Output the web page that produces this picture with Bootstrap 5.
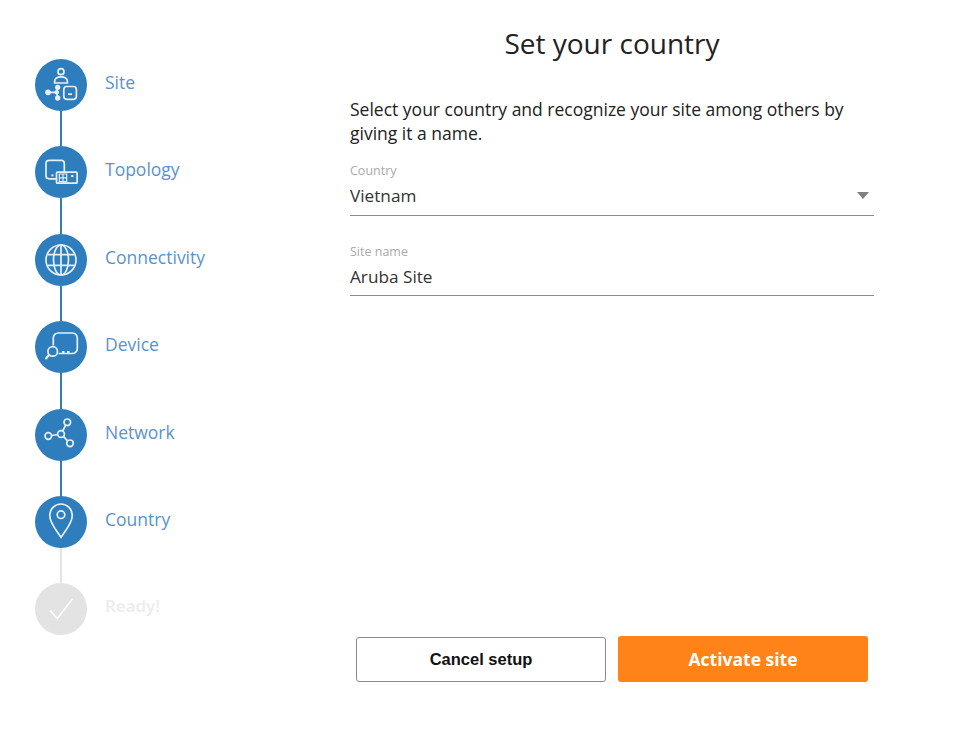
<!DOCTYPE html>
<html lang="en">
<head>
    <meta charset="UTF-8">
    <meta name="viewport" content="width=device-width, initial-scale=1.0">
    <title>Set your country</title>
    <link rel="stylesheet" href="https://cdn.jsdelivr.net/npm/bootstrap@5.3.0/dist/css/bootstrap.min.css">
    <style>
        body {
            background: #fff;
            font-family: "Open Sans", sans-serif;
            color: #222;
        }
        .setup-page {
            height: 752px;
            padding: 59px 100px 0 35px;
        }
        .stepper {
            width: 315px;
        }
        .step-item {
            height: 87.4px;
        }
        .step-rail {
            width: 52px;
        }
        .step-circle {
            width: 52px;
            height: 52px;
            background: #2e7dbd;
        }
        .step-circle svg {
            display: block;
            fill: none;
            stroke: #e6f0f8;
            stroke-width: 1.7;
        }
        .step-line {
            width: 2.5px;
            height: 35.4px;
            background: #2e7dbd;
        }
        .step-label {
            margin: 11px 0 0 18px;
            font-size: 17.5px;
            line-height: 24px;
            color: #5a93cb;
        }
        .step-item.is-next .step-line {
            background: #e3e3e3;
        }
        .step-item.is-todo .step-circle {
            background: #e3e3e3;
        }
        .step-item.is-todo .step-circle svg {
            stroke: #fff;
        }
        .step-item.is-todo .step-label {
            color: #ececec;
            font-size: 17px;
            font-weight: 600;
        }
        .setup-panel {
            width: 524px;
            margin-top: -59px;
        }
        .setup-title {
            margin: 25px 0 0;
            font-size: 28px;
            line-height: 36px;
            font-weight: 400;
            color: #222;
        }
        .setup-intro {
            margin: 36px 0 0;
            font-size: 17.5px;
            line-height: 24px;
        }
        .setup-field {
            margin-top: 19px;
        }
        .setup-field + .setup-field {
            margin-top: 29px;
        }
        .field-caption {
            margin: 0;
            font-size: 12.5px;
            line-height: 14px;
            color: #aaa;
        }
        .setup-field .form-control,
        .setup-field .form-select {
            padding: 0;
            border: 0;
            border-bottom: 1px solid #8c8c8c;
            border-radius: 0;
            font-size: 17.2px;
            line-height: 24px;
            color: #333;
            box-shadow: none;
        }
        .setup-field .form-select {
            height: 38px;
            padding-bottom: 1px;
            background-image: url("data:image/svg+xml,%3Csvg xmlns='http://www.w3.org/2000/svg' viewBox='0 0 12 7'%3E%3Cpath fill='%23808080' d='M0 0h12L6 7z'/%3E%3C/svg%3E");
            background-position: right 5px top 14px;
            background-size: 12px 7px;
        }
        .setup-field .form-control {
            height: 37px;
            padding-bottom: 1px;
        }
        .setup-actions {
            margin-top: 340px;
            padding: 0 6px;
        }
        .btn-cancel,
        .btn-activate {
            border-radius: 3px;
            font-weight: 700;
        }
        .btn-cancel {
            width: 250px;
            height: 45px;
            border: 1px solid #8a8a8a;
            background: #fff;
            color: #111;
            font-family: "Liberation Sans", sans-serif;
            font-size: 16.5px;
        }
        .btn-activate {
            width: 250px;
            height: 46px;
            border: 0;
            background: #ff8318;
            color: #fff;
            font-size: 17.5px;
        }
    </style>
</head>
<body>
    <div class="setup-page d-flex">
        <!-- Steps -->
        <div class="stepper flex-shrink-0">
            <div class="step-item d-flex">
                <div class="step-rail d-flex flex-column align-items-center">
                    <div class="step-circle rounded-circle">
                        <svg width="52" height="52" viewBox="0 0 52 52">
                            <circle cx="26" cy="12.7" r="3"/>
                            <path d="M19.6 24v-1.6c0-2.9 2.8-4.6 6.4-4.6s6.4 1.7 6.4 4.6V24z"/>
                            <path d="M12.7 33.3h9M22.7 28.3l-1 5 1 6"/>
                            <circle cx="21.7" cy="33.3" r="1.5" fill="#e6f0f8"/>
                            <circle cx="13" cy="33.3" r="2" fill="#e6f0f8"/>
                            <circle cx="22.7" cy="28.3" r="1.8" fill="#e6f0f8"/>
                            <circle cx="22.7" cy="39" r="1.8" fill="#e6f0f8"/>
                            <rect x="28.8" y="27.5" width="12.6" height="12.8" rx="3"/>
                            <path d="M33 35.2h4"/>
                        </svg>
                    </div>
                    <div class="step-line"></div>
                </div>
                <div class="step-label">Site</div>
            </div>
            <div class="step-item d-flex">
                <div class="step-rail d-flex flex-column align-items-center">
                    <div class="step-circle rounded-circle">
                        <svg width="52" height="52" viewBox="0 0 52 52">
                            <path d="M21 32.8h-7a3 3 0 0 1-3-3V17.3a3 3 0 0 1 3-3h12.3a3 3 0 0 1 3 3v8.7"/>
                            <rect x="21.5" y="26.2" width="20.6" height="11" rx="1"/>
                            <path d="M24.3 28h7.4v7.6h-7.4zM28 28v7.6M24.3 31.8h7.4" stroke-width="1.2"/>
                            <rect x="36.2" y="28.9" width="2.2" height="2.2" fill="#e6f0f8" stroke="none"/>
                            <rect x="16.4" y="28.4" width="2" height="2" fill="#e6f0f8" stroke="none"/>
                        </svg>
                    </div>
                    <div class="step-line"></div>
                </div>
                <div class="step-label">Topology</div>
            </div>
            <div class="step-item d-flex">
                <div class="step-rail d-flex flex-column align-items-center">
                    <div class="step-circle rounded-circle">
                        <svg width="52" height="52" viewBox="0 0 52 52">
                            <circle cx="26" cy="26" r="15"/>
                            <ellipse cx="26" cy="26" rx="7.5" ry="15"/>
                            <path d="M26 11v30M12.8 20.6h26.4M12.8 31.4h26.4"/>
                        </svg>
                    </div>
                    <div class="step-line"></div>
                </div>
                <div class="step-label">Connectivity</div>
            </div>
            <div class="step-item d-flex">
                <div class="step-rail d-flex flex-column align-items-center">
                    <div class="step-circle rounded-circle">
                        <svg width="52" height="52" viewBox="0 0 52 52">
                            <path d="M18.3 24.5V17a5 5 0 0 1 5-5h14a5 5 0 0 1 5 5v10.5a5 5 0 0 1-5 5H23.5"/>
                            <circle cx="17.7" cy="30.4" r="4.8"/>
                            <path d="M14.2 33.8L11 37.4" stroke-width="2.2" stroke-linecap="round"/>
                            <path d="M27 31h2.5M32 31h2.5" stroke-width="1.8"/>
                        </svg>
                    </div>
                    <div class="step-line"></div>
                </div>
                <div class="step-label">Device</div>
            </div>
            <div class="step-item d-flex">
                <div class="step-rail d-flex flex-column align-items-center">
                    <div class="step-circle rounded-circle">
                        <svg width="52" height="52" viewBox="0 0 52 52">
                            <circle cx="26" cy="25" r="3.4"/>
                            <circle cx="13.3" cy="27" r="3.3"/>
                            <circle cx="32.3" cy="13.3" r="3.3"/>
                            <circle cx="35" cy="34.3" r="3.3"/>
                            <path d="M16.5 26.5l6.2-1M27.6 22l3.2-5.8M28.4 27.4l4.2 4.4"/>
                        </svg>
                    </div>
                    <div class="step-line"></div>
                </div>
                <div class="step-label">Network</div>
            </div>
            <div class="step-item is-next d-flex">
                <div class="step-rail d-flex flex-column align-items-center">
                    <div class="step-circle rounded-circle">
                        <svg width="52" height="52" viewBox="0 0 52 52">
                            <path d="M26 41.4C22 35 14.7 27.5 14.7 19.3a11.3 11.3 0 0 1 22.6 0C37.3 27.5 30 35 26 41.4z"/>
                            <circle cx="26" cy="18.7" r="3.8"/>
                        </svg>
                    </div>
                    <div class="step-line"></div>
                </div>
                <div class="step-label">Country</div>
            </div>
            <div class="step-item is-todo d-flex">
                <div class="step-rail d-flex flex-column align-items-center">
                    <div class="step-circle rounded-circle">
                        <svg width="52" height="52" viewBox="0 0 52 52">
                            <path d="M15 27.4l7.3 8.3L37.3 16"/>
                        </svg>
                    </div>
                </div>
                <div class="step-label">Ready!</div>
            </div>
        </div>

        <!-- Form -->
        <div class="setup-panel flex-shrink-0">
            <h1 class="setup-title text-center">Set your country</h1>
            <p class="setup-intro">Select your country and recognize your site among others by giving it a name.</p>
            <div class="setup-field">
                <label class="field-caption d-block" for="countrySelect">Country</label>
                <select id="countrySelect" class="form-select">
                    <option>Vietnam</option>
                </select>
            </div>
            <div class="setup-field">
                <label class="field-caption d-block" for="siteName">Site name</label>
                <input id="siteName" type="text" class="form-control" value="Aruba Site">
            </div>
            <div class="setup-actions d-flex align-items-center gap-2">
                <button type="button" class="btn btn-cancel p-0">Cancel setup</button>
                <button type="button" class="btn btn-activate p-0 ms-1">Activate site</button>
            </div>
        </div>
    </div>

    <script src="https://cdn.jsdelivr.net/npm/bootstrap@5.3.0/dist/js/bootstrap.bundle.min.js"></script>
</body>
</html>
